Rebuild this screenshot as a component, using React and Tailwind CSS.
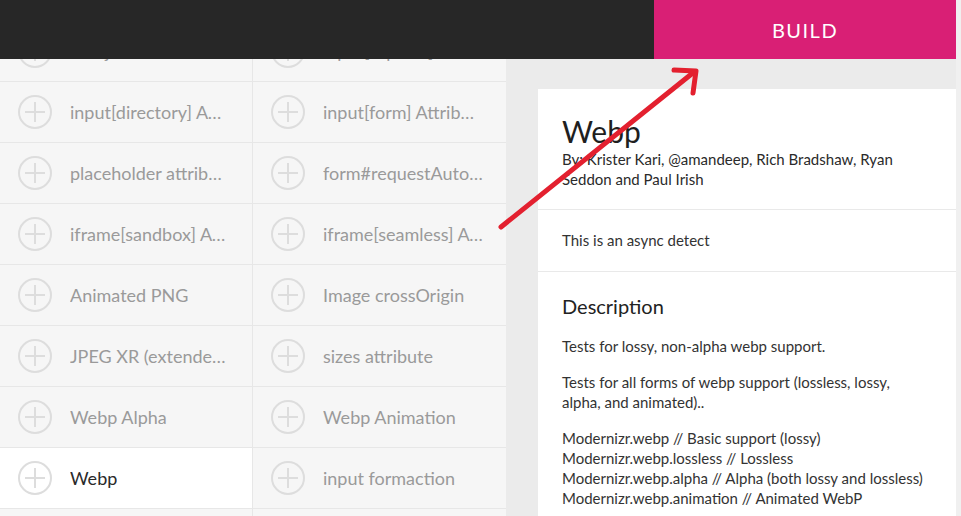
import React from "react";

const rows = [
  ["Emoji", "input[capture] Attribute"],
  ["input[directory] Attribute", "input[form] Attribute"],
  ["placeholder attribute", "form#requestAutocomplete()"],
  ["iframe[sandbox] Attribute", "iframe[seamless] Attribute"],
  ["Animated PNG", "Image crossOrigin"],
  ["JPEG XR (extended range)", "sizes attribute"],
  ["Webp Alpha", "Webp Animation"],
  ["Webp", "input formaction"],
  ["Webp Lossless", "srcset attribute"],
];

function Plus() {
  return (
    <svg width="34" height="34" viewBox="0 0 34 34" className="shrink-0">
      <circle cx="17" cy="17" r="16" fill="none" stroke="#dddddd" strokeWidth="2" />
      <path d="M7 17h20M17 7v20" stroke="#dddddd" strokeWidth="2" />
    </svg>
  );
}

function Cell({ label, active, left }) {
  return (
    <div
      className={
        "h-[61px] flex items-center pl-[18px] pr-[22px] gap-[18px] border-b border-[#e7e7e7] " +
        (left ? "border-r " : "") +
        (active ? "bg-white text-[#2a2a2a]" : "text-[#9a9a9a]")
      }
    >
      <Plus />
      <span className="truncate text-[18px] leading-[24px]">{label}</span>
    </div>
  );
}

export default function App() {
  return (
    <div
      className="relative w-[961px] h-[516px] overflow-hidden flex bg-[#ebebeb]"
      style={{ fontFamily: "Lato, 'Noto Sans', sans-serif" }}
    >
      <div className="w-[956px] flex flex-col h-full">
        <div className="h-[59px] shrink-0 bg-[#272727] flex justify-end relative z-10">
          <div className="w-[302px] h-full bg-[#d91f75] flex items-center justify-center text-white text-[20px] tracking-[1.5px]">
            BUILD
          </div>
        </div>
        <div className="flex flex-1 overflow-hidden">
          <div className="w-[506px] shrink-0 bg-[#f6f6f6] overflow-hidden">
            <div className="grid grid-cols-[253px_253px] mt-[-38px]">
              {rows.map(([a, b], i) => (
                <React.Fragment key={i}>
                  <Cell label={a} left active={a === "Webp"} />
                  <Cell label={b} />
                </React.Fragment>
              ))}
            </div>
          </div>
          <div className="flex-1 pl-[32px] pt-[30px] overflow-hidden">
            <div className="bg-white h-full text-[#222]">
              <div className="px-[24px] pt-[24px] pb-[20px] border-b border-[#e9e9e9]">
                <h1 className="text-[30px] leading-[36px] text-[#1f1f1f]">Webp</h1>
                <p className="text-[15px] leading-[20px] text-[#2a2a2a]">
                  By: Krister Kari, @amandeep, Rich Bradshaw, Ryan Seddon and Paul Irish
                </p>
              </div>
              <div className="px-[24px] py-[20px] border-b border-[#e9e9e9] text-[15px] leading-[21px] text-[#333]">
                This is an async detect
              </div>
              <div className="px-[24px] pt-[20px] text-[15px] leading-[20px] text-[#333]">
                <h2 className="text-[20px] leading-[28px] text-[#222] mb-[16px]">Description</h2>
                <p className="mb-[16px]">Tests for lossy, non-alpha webp support.</p>
                <p className="mb-[16px]">
                  Tests for all forms of webp support (lossless, lossy, alpha, and animated)..
                </p>
                <p>
                  Modernizr.webp // Basic support (lossy)
                  <br />
                  Modernizr.webp.lossless // Lossless
                  <br />
                  Modernizr.webp.alpha // Alpha (both lossy and lossless)
                  <br />
                  Modernizr.webp.animation // Animated WebP
                </p>
              </div>
            </div>
          </div>
        </div>
      </div>
      <div className="w-[5px] h-full bg-[#f0f0f0]" />
      <svg
        className="absolute left-0 top-0 pointer-events-none z-20"
        width="961"
        height="516"
        viewBox="0 0 961 516"
      >
        <g stroke="#e3202f" strokeWidth="5" strokeLinecap="round" strokeLinejoin="round" fill="none">
          <path d="M501 227 L694 72" />
          <path d="M674 70 L696 71 L693 93" />
        </g>
      </svg>
    </div>
  );
}
